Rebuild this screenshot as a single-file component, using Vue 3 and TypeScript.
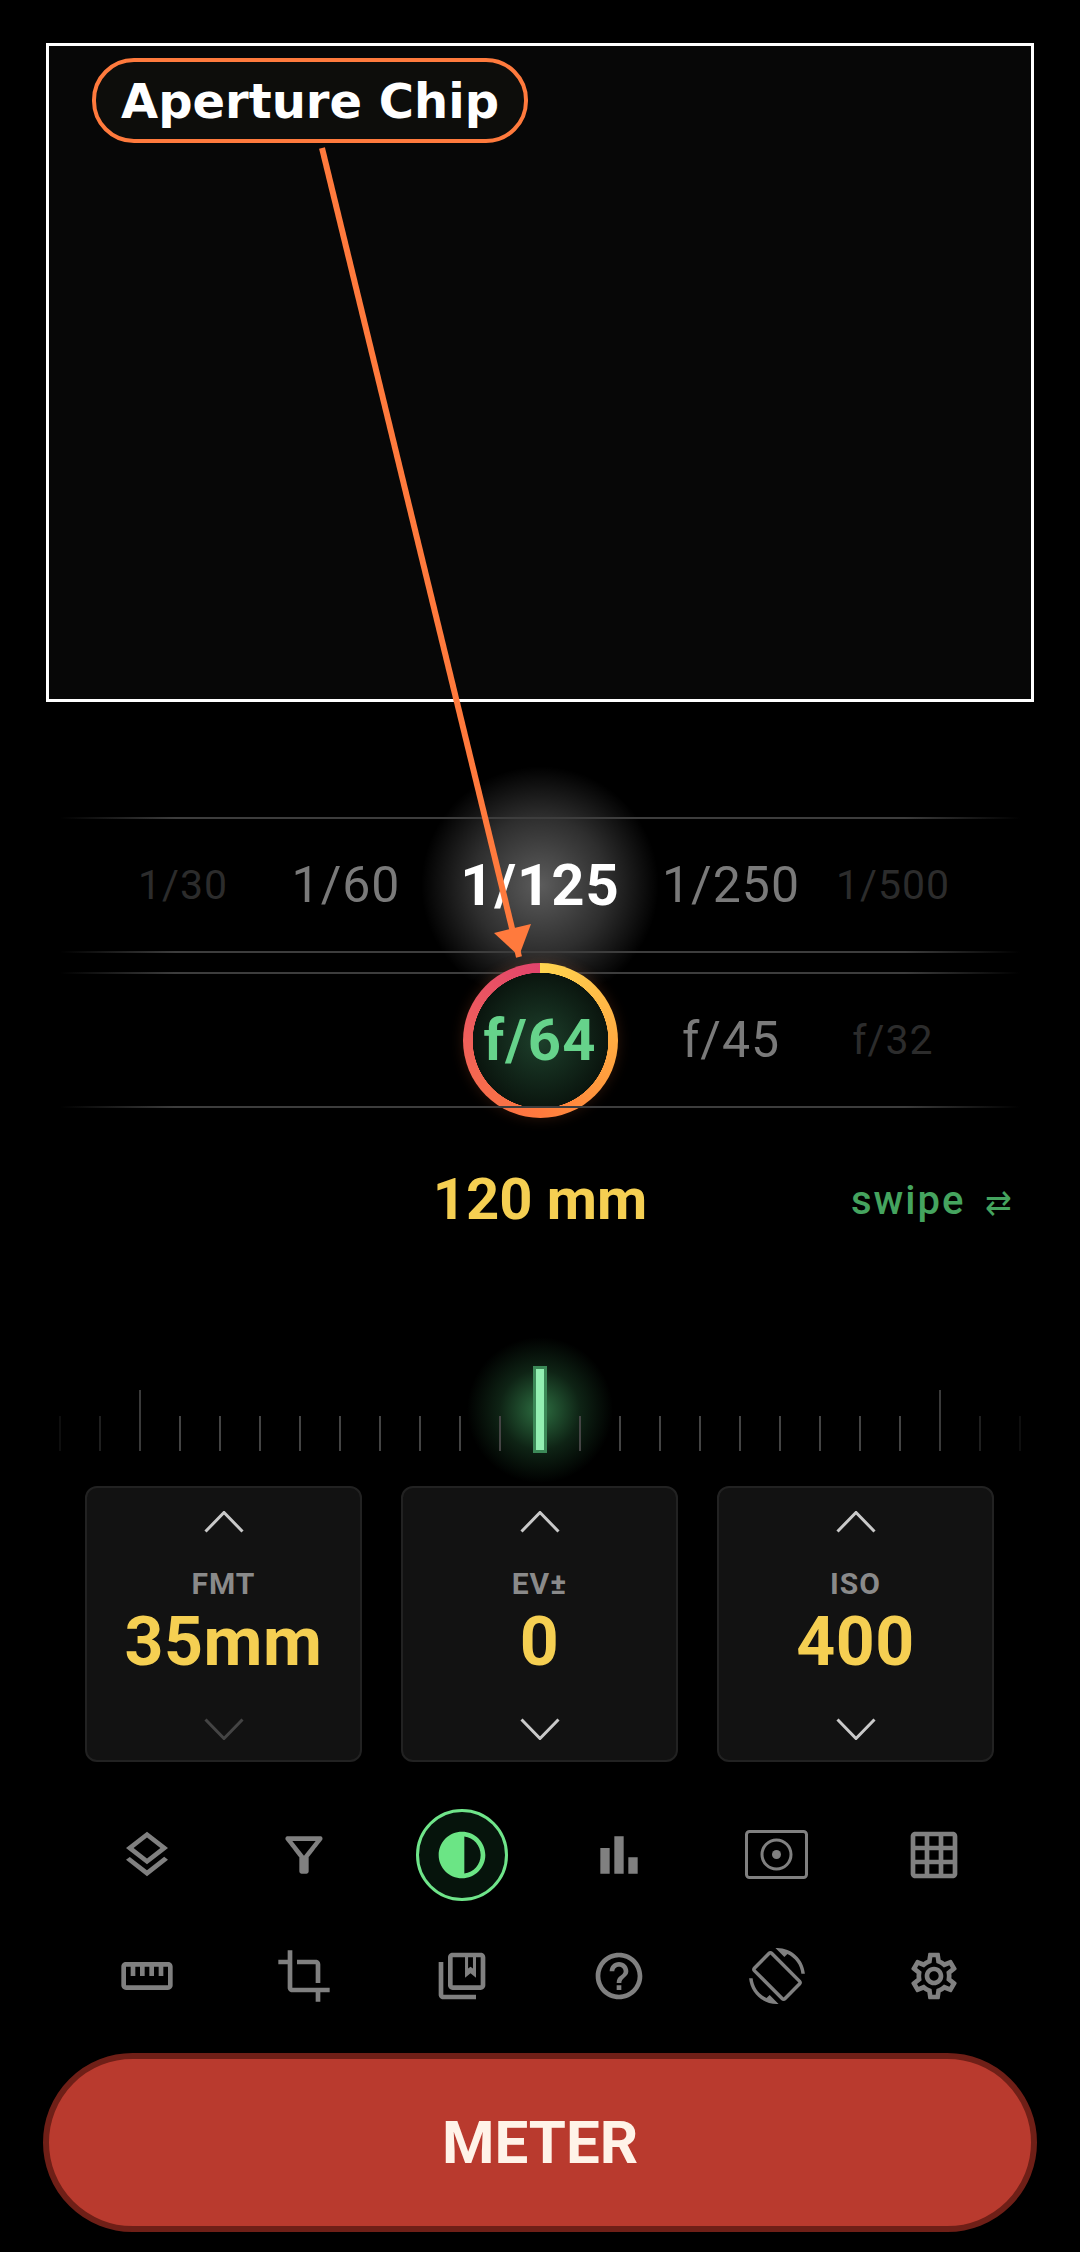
<script setup lang="ts">
const shutter = [
  { text: '1/30', cls: 'far' },
  { text: '1/60', cls: 'near' },
  { text: '1/125', cls: 'now' },
  { text: '1/250', cls: 'near' },
  { text: '1/500', cls: 'far' }
];

const aperture = [
  { text: '', cls: 'far' },
  { text: '', cls: 'near' },
  { text: 'f/64', cls: 'ring' },
  { text: 'f/45', cls: 'near' },
  { text: 'f/32', cls: 'far' }
];

// ruler: one tick every 40px, tall at +-10, fading at the ends
const ticks = Array.from({ length: 25 }, (_, i) => {
  const k = i - 12;
  const d = Math.abs(k);
  return {
    k,
    major: d === 10,
    hidden: k === 0,
    opacity: d === 12 ? 0.2 : d === 11 ? 0.45 : d === 10 ? 0.85 : 1
  };
});

const steppers = [
  { label: 'FMT', value: '35mm', downOff: true },
  { label: 'EV±', value: '0', downOff: false },
  { label: 'ISO', value: '400', downOff: false }
];

const toolsTop = [
  { id: 'layers', d: 'M11.99 18.54l-7.37-5.73L3 14.07l9 7 9-7-1.63-1.27-7.38 5.74zM12 16l7.36-5.73L21 9l-9-7-9 7 1.63 1.27L12 16zm0-11.47L17.74 9 12 13.47 6.26 9 12 4.53z' },
  { id: 'filter', d: 'M7 6h10l-5.01 6.3L7 6zm-2.75-.39C6.27 8.2 10 13 10 13v6c0 .55.45 1 1 1h2c.55 0 1-.45 1-1v-6s3.72-4.8 5.74-7.39c.51-.66.04-1.61-.79-1.61H5.04c-.83 0-1.3.95-.79 1.61z' },
  { id: 'contrast', active: true, d: 'M12 22c5.52 0 10-4.48 10-10S17.52 2 12 2 2 6.48 2 12s4.48 10 10 10zm1-17.93c3.94.49 7 3.85 7 7.93s-3.05 7.44-7 7.93V4.07z' },
  { id: 'bars', d: 'M4 9h4v11H4zM16 13h4v7h-4zM10 4h4v16h-4z' },
  { id: 'meter', d: '' },
  { id: 'grid', d: 'M20 2H4c-1.1 0-2 .9-2 2v16c0 1.1.9 2 2 2h16c1.1 0 2-.9 2-2V4c0-1.1-.9-2-2-2zM8 20H4v-4h4v4zm0-6H4v-4h4v4zm0-6H4V4h4v4zm6 12h-4v-4h4v4zm0-6h-4v-4h4v4zm0-6h-4V4h4v4zm6 12h-4v-4h4v4zm0-6h-4v-4h4v4zm0-6h-4V4h4v4z' }
];

const toolsBottom = [
  { id: 'ruler', d: 'M21 6H3c-1.1 0-2 .9-2 2v8c0 1.1.9 2 2 2h18c1.1 0 2-.9 2-2V8c0-1.1-.9-2-2-2zm0 10H3V8h2v4h2V8h2v4h2V8h2v4h2V8h2v4h2V8h2v8z' },
  { id: 'crop', d: 'M17 15h2V7c0-1.1-.9-2-2-2H9v2h8v8zM7 17V1H5v4H1v2h4v10c0 1.1.9 2 2 2h10v4h2v-4h4v-2H7z' },
  { id: 'saved', d: 'M4 6H2v14c0 1.1.9 2 2 2h14v-2H4V6zM20 2H8c-1.1 0-2 .9-2 2v12c0 1.1.9 2 2 2h12c1.1 0 2-.9 2-2V4c0-1.1-.9-2-2-2zm0 14H8V4h5.3v8.7l2.35-1.9L18 12.7V4h2v12zM14.6 4v4.8l1.05-.8 1.05.8V4z' },
  { id: 'help', d: 'M11 18h2v-2h-2v2zm1-16C6.48 2 2 6.48 2 12s4.48 10 10 10 10-4.48 10-10S17.52 2 12 2zm0 18c-4.41 0-8-3.59-8-8s3.59-8 8-8 8 3.59 8 8-3.59 8-8 8zm0-14c-2.21 0-4 1.79-4 4h2c0-1.1.9-2 2-2s2 .9 2 2c0 2-3 1.75-3 5h2c0-2.25 3-2.5 3-5 0-2.21-1.79-4-4-4z' },
  { id: 'rotate', d: 'M16.48 2.52c3.27 1.55 5.61 4.72 5.97 8.48h1.5C23.44 4.84 18.29 0 12 0l-.66.03 3.81 3.81 1.33-1.32zm-6.25-.77c-.59-.59-1.54-.59-2.12 0L1.75 8.11c-.59.59-.59 1.54 0 2.12l12.02 12.02c.59.59 1.54.59 2.12 0l6.36-6.36c.59-.59.59-1.54 0-2.12L10.23 1.75zm4.6 19.44L2.81 9.17l6.36-6.36 12.02 12.02-6.36 6.36zm-7.31.29C4.25 19.94 1.91 16.76 1.55 13H.05C.56 19.16 5.71 24 12 24l.66-.03-3.81-3.81-1.33 1.32z' },
  { id: 'gear', d: 'M19.43 12.98c.04-.32.07-.64.07-.98 0-.34-.03-.66-.07-.98l2.11-1.65c.19-.15.24-.42.12-.64l-2-3.46c-.09-.16-.26-.25-.44-.25-.06 0-.12.01-.17.03l-2.49 1c-.52-.4-1.08-.73-1.69-.98l-.38-2.65C14.46 2.18 14.25 2 14 2h-4c-.25 0-.46.18-.49.42l-.38 2.65c-.61.25-1.17.59-1.69.98l-2.49-1c-.06-.02-.12-.03-.18-.03-.17 0-.34.09-.43.25l-2 3.46c-.13.22-.07.49.12.64l2.11 1.65c-.04.32-.07.65-.07.98 0 .33.03.66.07.98l-2.11 1.65c-.19.15-.24.42-.12.64l2 3.46c.09.16.26.25.44.25.06 0 .12-.01.17-.03l2.49-1c.52.4 1.08.73 1.69.98l.38 2.65c.03.24.24.42.49.42h4c.25 0 .46-.18.49-.42l.38-2.65c.61-.25 1.17-.59 1.69-.98l2.49 1c.06.02.12.03.18.03.17 0 .34-.09.43-.25l2-3.46c.12-.22.07-.49-.12-.64l-2.11-1.65zm-1.98-1.71c.04.31.05.52.05.73 0 .21-.02.43-.05.73l-.14 1.13.89.7 1.08.84-.7 1.21-1.27-.51-1.04-.42-.9.68c-.43.32-.84.56-1.25.73l-1.06.43-.16 1.13-.2 1.35h-1.4l-.19-1.35-.16-1.13-1.06-.43c-.43-.18-.83-.41-1.23-.71l-.91-.7-1.06.43-1.27.51-.7-1.21 1.08-.84.89-.7-.14-1.13c-.03-.31-.05-.54-.05-.74s.02-.43.05-.73l.14-1.13-.89-.7-1.08-.84.7-1.21 1.27.51 1.04.42.9-.68c.43-.32.84-.56 1.25-.73l1.06-.43.16-1.13.2-1.35h1.39l.19 1.35.16 1.13 1.06.43c.43.18.83.41 1.23.71l.91.7 1.06-.43 1.27-.51.7 1.21-1.07.85-.89.7.14 1.13zM12 8c-2.21 0-4 1.79-4 4s1.79 4 4 4 4-1.79 4-4-1.79-4-4-4zm0 6c-1.1 0-2-.9-2-2s.9-2 2-2 2 .9 2 2-.9 2-2 2z' }
];
</script>

<template>
  <div class="screen">
    <section class="preview">
      <span class="chip">Aperture Chip</span>
    </section>

    <div class="wheels">
      <div class="wheel">
        <span v-for="item in shutter" :key="item.text" class="stop" :class="item.cls">{{ item.text }}</span>
      </div>
      <div class="wheel">
        <span v-for="(item, i) in aperture" :key="i" class="stop" :class="item.cls">{{ item.text }}</span>
      </div>
    </div>

    <div class="focal">
      <span class="mm">120 mm</span>
      <span class="swipe">swipe<i>⇄</i></span>
    </div>

    <div class="ruler">
      <span
        v-for="t in ticks"
        :key="t.k"
        class="tick"
        :class="{ major: t.major, gone: t.hidden }"
        :style="{ opacity: t.opacity }"
      />
      <span class="needle" />
    </div>

    <div class="steppers">
      <div v-for="s in steppers" :key="s.label" class="stepper">
        <svg class="chev" viewBox="0 0 40 22"><path d="M1.5 20.5 20 1.5l18.5 19" /></svg>
        <span class="label">{{ s.label }}</span>
        <span class="value">{{ s.value }}</span>
        <svg class="chev" :class="{ off: s.downOff }" viewBox="0 0 40 22"><path d="M1.5 1.5 20 20.5 38.5 1.5" /></svg>
      </div>
    </div>

    <div class="tools">
      <div v-for="t in toolsTop" :key="t.id" class="tool" :class="{ active: t.active }">
        <svg v-if="t.id === 'meter'" class="wide" viewBox="0 0 63 49">
          <rect x="1.5" y="1.5" width="60" height="46" rx="3" />
          <circle cx="31.5" cy="24.5" r="14.5" />
          <circle class="dot" cx="31.5" cy="24.5" r="4.5" />
        </svg>
        <svg v-else viewBox="0 0 24 24"><path :d="t.d" /></svg>
      </div>
      <div v-for="t in toolsBottom" :key="t.id" class="tool">
        <svg viewBox="0 0 24 24"><path :d="t.d" fill-rule="evenodd" /></svg>
      </div>
    </div>

    <button class="meter">METER</button>

    <!-- callout from the chip down to the aperture ring -->
    <svg class="callout" viewBox="0 0 1080 2252">
      <line x1="322" y1="148" x2="519" y2="957" />
      <polygon points="531,924 494,933 519,956" />
    </svg>
  </div>
</template>

<style scoped>
.screen {
  position: relative;
  isolation: isolate;
  width: 1080px;
  height: 2252px;
  overflow: hidden;
  background: #000;
  font-family: Roboto, "Noto Sans", sans-serif;
}

.preview {
  box-sizing: border-box;
  width: 988px;
  height: 659px;
  margin: 43px 0 0 46px;
  padding: 12px 43px;
  border: 3px solid #fff;
  background: #070707;
}

.chip {
  box-sizing: border-box;
  display: inline-flex;
  align-items: center;
  justify-content: center;
  width: 436px;
  height: 85px;
  border: 4px solid #ff7a3d;
  border-radius: 42px;
  background: #0d0d0b;
  color: #fff;
  font-family: "DejaVu Sans", sans-serif;
  font-size: 48px;
  font-weight: 700;
  white-space: nowrap;
}

.wheels {
  margin-top: 115px;
}

.wheel {
  position: relative;
  display: grid;
  grid-template-columns: 138px 188px 200px 182px 142px;
  grid-template-rows: 136px;
  align-items: center;
  height: 136px;
  padding-left: 114px;
}

.wheel + .wheel {
  margin-top: 19px;
}

.wheel::before,
.wheel::after {
  content: "";
  position: absolute;
  left: 60px;
  right: 60px;
  height: 2px;
  background: linear-gradient(90deg, transparent, #3d3d3d 12%, #3d3d3d 88%, transparent);
}

.wheel::before { top: 0; }
.wheel::after { bottom: 0; }

.stop {
  position: relative;
  text-align: center;
  letter-spacing: 1px;
  white-space: nowrap;
}

.far {
  color: #2c2c2c;
  font-size: 41px;
}

.near {
  color: #7a7a7a;
  font-size: 50px;
}

.now {
  color: #fff;
  font-size: 58px;
  font-weight: 700;
}

.now::before {
  content: "";
  position: absolute;
  z-index: -1;
  left: 50%;
  top: 50%;
  width: 240px;
  height: 240px;
  transform: translate(-50%, -50%);
  border-radius: 50%;
  background: radial-gradient(circle, rgba(255, 255, 255, 0.36), rgba(255, 255, 255, 0.18) 40%, transparent 70%);
}

.ring {
  justify-self: center;
  box-sizing: border-box;
  display: flex;
  align-items: center;
  justify-content: center;
  width: 155px;
  height: 155px;
  border-radius: 50%;
  color: #66d38b;
  font-size: 58px;
  font-weight: 700;
  background:
    radial-gradient(circle at center, #1d3f2b 0, #0a150e 67.5px, transparent 68px),
    conic-gradient(#ffd54f, #ff9a3d 35%, #ff7a3d 50%, #f0605a 75%, #e2446c 100%);
  box-shadow: 0 0 14px rgba(255, 122, 61, 0.18);
}

.focal {
  position: relative;
  display: flex;
  justify-content: center;
  align-items: center;
  height: 66px;
  margin-top: 58px;
}

.mm {
  color: #f5cf52;
  font-size: 58px;
  font-weight: 700;
}

.swipe {
  position: absolute;
  left: 851px;
  top: 11px;
  color: #45a45f;
  font-size: 40px;
  font-weight: 500;
  letter-spacing: 2px;
}

.swipe i {
  margin-left: 20px;
  font-style: normal;
  font-size: 32px;
  letter-spacing: 0;
}

.ruler {
  position: relative;
  display: flex;
  justify-content: center;
  align-items: flex-end;
  gap: 38px;
  height: 85px;
  margin-top: 134px;
}

.ruler::before {
  content: "";
  position: absolute;
  left: 50%;
  top: 44px;
  width: 146px;
  height: 146px;
  transform: translate(-50%, -50%);
  border-radius: 50%;
  background: radial-gradient(circle closest-side, rgba(90, 220, 130, 0.5), rgba(90, 220, 130, 0.16) 55%, transparent);
}

.tick {
  position: relative;
  width: 2px;
  height: 35px;
  background: #444;
}

.tick.major {
  height: 61px;
}

.tick.gone {
  visibility: hidden;
}

.needle {
  position: absolute;
  left: 533px;
  top: 0;
  box-sizing: border-box;
  width: 14px;
  height: 87px;
  border: 3px solid #3c8a58;
  background: #93f0b2;
}

.steppers {
  display: grid;
  grid-template-columns: repeat(3, 277px);
  gap: 39px;
  margin: 35px 0 0 85px;
}

.stepper {
  box-sizing: border-box;
  display: flex;
  flex-direction: column;
  align-items: center;
  height: 276px;
  padding-top: 23px;
  border: 2px solid #222;
  border-radius: 12px;
  background: #121212;
}

.chev {
  flex: none;
  width: 40px;
  height: 22px;
  fill: none;
  stroke: #c9c9c9;
  stroke-width: 3;
}

.chev.off {
  stroke: #444;
}

.label {
  margin-top: 34px;
  color: #8a8a8a;
  font-size: 30px;
  font-weight: 700;
  line-height: 33px;
  letter-spacing: 1px;
}

.value {
  height: 78px;
  margin-top: 3px;
  margin-bottom: 37px;
  color: #f5cf52;
  font-size: 68px;
  font-weight: 700;
  line-height: 78px;
  letter-spacing: 0.5px;
}

.tools {
  display: grid;
  grid-template-columns: repeat(6, 157.5px);
  grid-auto-rows: 121px;
  margin: 32px 0 0 68px;
}

.tool {
  justify-self: center;
  align-self: center;
  display: flex;
  align-items: center;
  justify-content: center;
  width: 92px;
  height: 92px;
}

.tool svg {
  width: 56px;
  height: 56px;
  fill: #808080;
}

.tool svg.wide {
  width: 63px;
  height: 49px;
  fill: none;
  stroke: #808080;
  stroke-width: 3;
}

.tool svg.wide .dot {
  fill: #808080;
  stroke: none;
}

.tool.active {
  box-sizing: border-box;
  border: 3px solid #6fe58a;
  border-radius: 50%;
  background: #06140c;
}

.tool.active svg {
  fill: #6be585;
}

.meter {
  display: block;
  box-sizing: border-box;
  width: 994px;
  height: 179px;
  margin: 17px 0 0 43px;
  border: 6px solid #6f1f17;
  border-radius: 90px;
  background: #b93a2e;
  color: #fff3e8;
  font-family: inherit;
  font-size: 60px;
  font-weight: 700;
}

.callout {
  position: absolute;
  left: 0;
  top: 0;
  width: 1080px;
  height: 2252px;
  pointer-events: none;
}

.callout line {
  stroke: #ff7a3d;
  stroke-width: 6;
}

.callout polygon {
  fill: #ff7a3d;
}
</style>
